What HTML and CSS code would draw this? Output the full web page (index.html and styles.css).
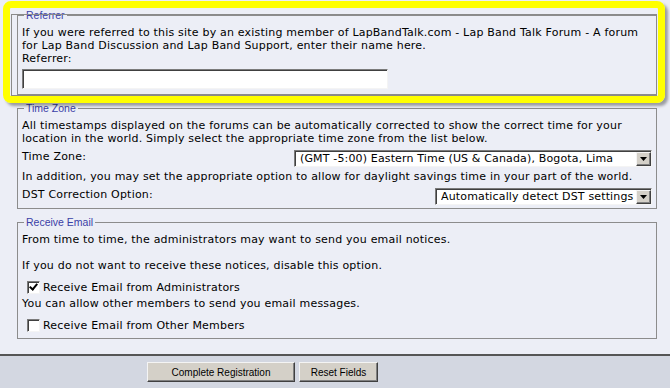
FILE: index.html
```html
<!DOCTYPE html>
<html lang="en">
<head>
    <meta charset="UTF-8">
    <title>Registration - Preferences</title>
    <link rel="stylesheet" href="styles.css">
</head>
<body>

    <div class="page">
        <!-- yellow highlight drawn over the referrer box -->
        <div class="highlight"></div>

        <fieldset class="group group-first">
            <legend>Referrer</legend>
            <p>If you were referred to this site by an existing member of LapBandTalk.com - Lap Band Talk Forum - A forum for Lap Band Discussion and Lap Band Support, enter their name here.</p>
            <label class="field-label" for="referrer">Referrer:</label>
            <input type="text" id="referrer" class="text-input">
        </fieldset>

        <fieldset class="group">
            <legend>Time Zone</legend>
            <p>All timestamps displayed on the forums can be automatically corrected to show the correct time for your location in the world. Simply select the appropriate time zone from the list below.</p>
            <div class="row">
                <label for="timezone">Time Zone:</label>
                <span class="select select-tz">
                    <select id="timezone">
                        <option>(GMT -5:00) Eastern Time (US &amp; Canada), Bogota, Lima</option>
                    </select>
                    <span class="arrow"><svg width="7" height="4" viewBox="0 0 7 4"><path d="M0 0h7L3.5 4z" fill="#000"/></svg></span>
                </span>
            </div>
            <p>In addition, you may set the appropriate option to allow for daylight savings time in your part of the world.</p>
            <div class="row">
                <label for="dst">DST Correction Option:</label>
                <span class="select select-dst">
                    <select id="dst">
                        <option>Automatically detect DST settings</option>
                    </select>
                    <span class="arrow"><svg width="7" height="4" viewBox="0 0 7 4"><path d="M0 0h7L3.5 4z" fill="#000"/></svg></span>
                </span>
            </div>
        </fieldset>

        <fieldset class="group">
            <legend>Receive Email</legend>
            <p>From time to time, the administrators may want to send you email notices.<br><br>If you do not want to receive these notices, disable this option.</p>
            <label class="check"><input type="checkbox" checked>Receive Email from Administrators</label>
            <p>You can allow other members to send you email messages.</p>
            <label class="check"><input type="checkbox">Receive Email from Other Members</label>
        </fieldset>
    </div>

    <div class="footer">
        <button class="btn btn-submit">Complete Registration</button>
        <button class="btn btn-reset">Reset Fields</button>
    </div>

</body>
</html>
```

FILE: styles.css
```css
body {
    margin: 0;
    background: #eceef6;
    font-family: "DejaVu Sans", Verdana, sans-serif;
    font-size: 11px;
    line-height: 13px;
    letter-spacing: 0.2px;
    color: #000;
}

.page {
    position: relative;
    padding: 9px 0 15px;
}

.highlight {
    position: absolute;
    top: 1px;
    left: 3px;
    width: 662px;
    height: 102px;
    box-sizing: border-box;
    border: 7px solid #ffff00;
    border-radius: 8px;
    box-shadow: 3px 3px 3px rgba(0, 0, 0, 0.35);
    z-index: 2;
    pointer-events: none;
}

.highlight::before {
    content: '';
    position: absolute;
    top: 6px;
    left: 1px;
    right: 1px;
    bottom: 0;
    border: 1px solid #8a8a8a;
}

.group {
    margin: 7px 13px 0 17px;
    padding: 5px 4px 3px;
    border: 1px solid #8c8c8c;
    min-width: 0;
}

.group-first {
    margin-top: 0;
}

.group legend {
    font-family: "Liberation Sans", Arial, sans-serif;
    font-size: 10.5px;
    line-height: 12px;
    letter-spacing: 0;
    color: #3a40a6;
    padding: 0 2px;
    margin-left: 2px;
}

p {
    margin: 0;
}

.field-label {
    display: block;
}

.text-input {
    display: block;
    width: 366px;
    height: 20px;
    box-sizing: border-box;
    margin: 4px 0 2px;
    padding: 0 3px;
    border: 1px solid;
    border-color: #7b7b7b #f4f4f4 #f4f4f4 #7b7b7b;
    box-shadow: inset 1px 1px 0 #404040;
    background: #fff;
    font: inherit;
}

.row {
    display: flex;
    justify-content: space-between;
    align-items: flex-start;
    margin: 5px 0 3px;
}

.row:last-child {
    margin-bottom: 0;
}

.select {
    position: relative;
    display: block;
}

.select-tz {
    width: 358px;
}

.select-dst {
    width: 217px;
}

.select select {
    appearance: none;
    display: block;
    width: 100%;
    height: 17px;
    box-sizing: border-box;
    margin: 0;
    padding: 0 0 0 5px;
    border: 1px solid;
    border-color: #7b7b7b #f4f4f4 #f4f4f4 #7b7b7b;
    box-shadow: inset 1px 1px 0 #404040;
    background: #fff;
    color: #000;
    font: inherit;
    letter-spacing: 0.15px;
    border-radius: 0;
}

.arrow {
    position: absolute;
    top: 2px;
    right: 1px;
    width: 15px;
    height: 14px;
    box-sizing: border-box;
    background: #d4d0c8;
    border: 1px solid;
    border-color: #f4f4f4 #404040 #404040 #f4f4f4;
    box-shadow: inset -1px -1px 0 #808080;
    display: flex;
    align-items: center;
    justify-content: center;
}

.check {
    display: flex;
    align-items: center;
    height: 20px;
    margin-top: 5px;
}

.check input {
    appearance: none;
    position: relative;
    width: 13px;
    height: 13px;
    box-sizing: border-box;
    margin: 0 3px 0 5px;
    border: 1px solid;
    border-color: #7b7b7b #f4f4f4 #f4f4f4 #7b7b7b;
    box-shadow: inset 1px 1px 0 #404040;
    background: #fff;
}

.check input:checked::after {
    content: '';
    position: absolute;
    left: 3px;
    top: 0;
    width: 3px;
    height: 6px;
    border: solid #000;
    border-width: 0 2px 2px 0;
    transform: rotate(40deg);
}

.footer {
    display: flex;
    gap: 4px;
    padding: 6px 0 6px 147px;
    border-top: 2px solid #555;
    background: #d3d7e1;
}

.btn {
    height: 20px;
    box-sizing: border-box;
    padding: 0;
    background: #d4d0c8;
    border: 1px solid;
    border-color: #f4f4f4 #404040 #404040 #f4f4f4;
    box-shadow: inset -1px -1px 0 #808080;
    font-family: "Liberation Sans", Arial, sans-serif;
    font-size: 10px;
    color: #000;
}

.btn-submit {
    width: 148px;
}

.btn-reset {
    width: 79px;
}
```
